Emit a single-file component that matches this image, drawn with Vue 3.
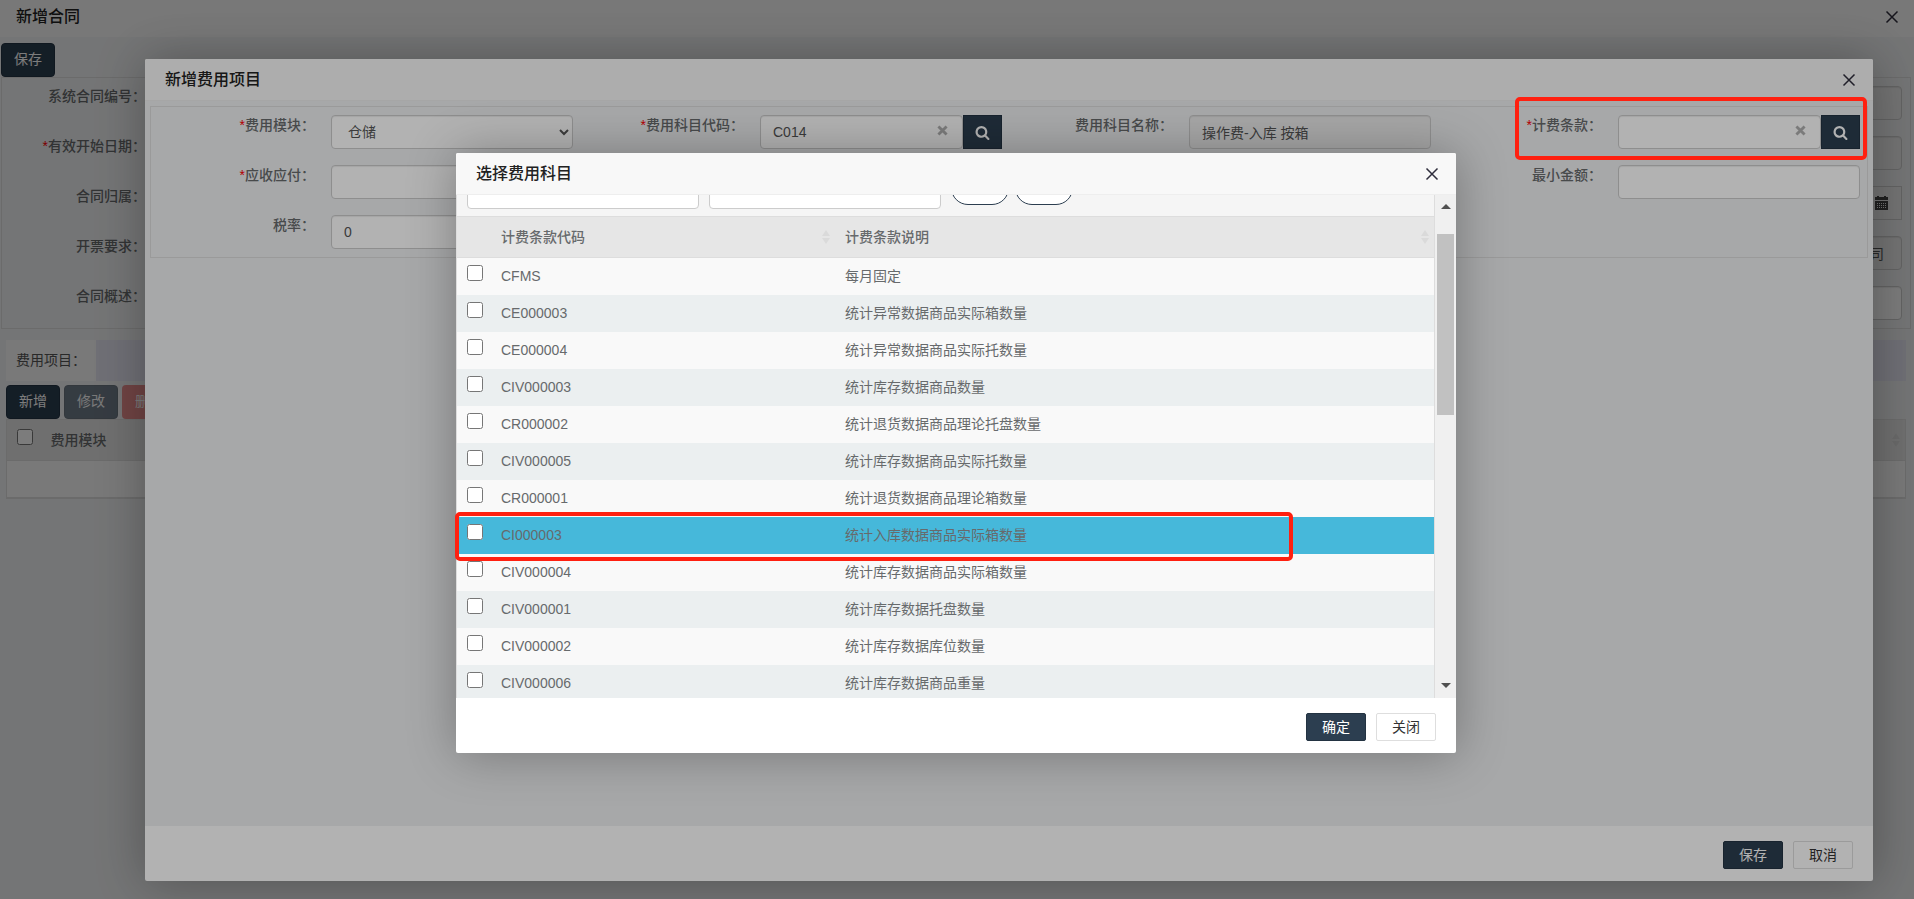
<script setup>
import { ref, onMounted } from 'vue'

const scroller = ref(null)

const contractFields = [
  { id: 'contract-no', label: '系统合同编号', required: false },
  { id: 'start-date', label: '有效开始日期', required: true },
  { id: 'owner', label: '合同归属', required: false },
  { id: 'invoice', label: '开票要求', required: false },
  { id: 'summary', label: '合同概述', required: false },
]

const terms = [
  { code: 'CFMS', name: '每月固定' },
  { code: 'CE000003', name: '统计异常数据商品实际箱数量' },
  { code: 'CE000004', name: '统计异常数据商品实际托数量' },
  { code: 'CIV000003', name: '统计库存数据商品数量' },
  { code: 'CR000002', name: '统计退货数据商品理论托盘数量' },
  { code: 'CIV000005', name: '统计库存数据商品实际托数量' },
  { code: 'CR000001', name: '统计退货数据商品理论箱数量' },
  { code: 'CI000003', name: '统计入库数据商品实际箱数量', active: true },
  { code: 'CIV000004', name: '统计库存数据商品实际箱数量' },
  { code: 'CIV000001', name: '统计库存数据托盘数量' },
  { code: 'CIV000002', name: '统计库存数据库位数量' },
  { code: 'CIV000006', name: '统计库存数据商品重量' },
]

onMounted(() => {
  scroller.value.scrollTop = 28
})
</script>

<template>
  <div class="page">
    <header class="page-head">
      <h1>新增合同</h1>
      <button class="close" type="button" aria-label="关闭">
        <svg viewBox="0 0 16 16"><path d="M2.5 2.5l11 11M13.5 2.5l-11 11" /></svg>
      </button>
    </header>

    <div class="toolbar">
      <button class="btn primary" type="button">保存</button>
    </div>

    <form class="contract">
      <div class="contract-col">
        <div v-for="f in contractFields" :key="f.id" class="contract-field">
          <label :for="f.id"><i v-if="f.required">*</i>{{ f.label }}：</label>
          <input :id="f.id" class="control" type="text">
        </div>
      </div>
      <div class="contract-col side">
        <input class="control" type="text" disabled aria-label="合同信息">
        <input class="control" type="text" disabled aria-label="合同信息">
        <div class="group">
          <input class="control" type="text" aria-label="日期">
          <span class="addon">
            <svg viewBox="0 0 13 14">
              <path fill-rule="evenodd" d="M0 1h2V0h2v1h5V0h2v1h2v3H0zM0 5h13v9H0zM2 7v1h1V7zm2 0v1h1V7zm2 0v1h1V7zm2 0v1h1V7zm2 0v1h1V7zM2 9v1h1V9zm2 0v1h1V9zm2 0v1h1V9zm2 0v1h1V9zm2 0v1h1V9zM2 11v1h1v-1zm2 0v1h1v-1zm2 0v1h1v-1zm2 0v1h1v-1zm2 0v1h1v-1z" />
            </svg>
          </span>
        </div>
        <input class="control company" type="text" value="司" disabled aria-label="公司">
        <input class="control" type="text" aria-label="备注">
      </div>
    </form>

    <section class="items">
      <div class="tabs"><button class="tab" type="button">费用项目：</button></div>
      <div class="actions">
        <button class="btn primary" type="button">新增</button>
        <button class="btn primary" type="button" disabled>修改</button>
        <button class="btn danger" type="button" disabled>删除</button>
      </div>
      <table class="grid-table framed">
        <colgroup><col class="c-check"><col></colgroup>
        <thead>
          <tr>
            <th><input type="checkbox" aria-label="全选"></th>
            <th>
              <div class="th-in"><span>费用模块</span><svg class="sort" viewBox="0 0 8 14"><path d="M4 0l4 6H0zM4 14l4-6H0z" /></svg></div>
            </th>
          </tr>
        </thead>
        <tbody><tr><td></td><td>&nbsp;</td></tr></tbody>
      </table>
    </section>

    <div class="shade outer">
      <section class="dialog">
        <header class="dialog-head">
          <h2>新增费用项目</h2>
          <button class="close" type="button" aria-label="关闭">
            <svg viewBox="0 0 16 16"><path d="M2.5 2.5l11 11M13.5 2.5l-11 11" /></svg>
          </button>
        </header>
        <div class="dialog-body fee-body">
          <form class="fee-form">
            <div class="field">
              <label for="module"><i>*</i>费用模块：</label>
              <select id="module" class="control"><option>仓储</option></select>
            </div>
            <div class="field">
              <label for="code"><i>*</i>费用科目代码：</label>
              <div class="group">
                <div class="clearable">
                  <input id="code" class="control" type="text" value="C014">
                  <button class="clear" type="button" aria-label="清除"><svg viewBox="0 0 10 10"><path d="M1.3 1.3l7.4 7.4M8.7 1.3L1.3 8.7" /></svg></button>
                </div>
                <button class="search" type="button" aria-label="查找">
                  <svg viewBox="0 0 1792 1792"><path d="M1216 832q0-185-131.500-316.500t-316.500-131.500-316.500 131.500-131.500 316.500 131.500 316.500 316.500 131.500 316.500-131.500 131.500-316.500zm512 832q0 52-38 90t-90 38q-54 0-90-38l-343-342q-179 124-399 124-143 0-273.500-55.500t-225-150-150-225-55.500-273.500 55.500-273.500 150-225 225-150 273.500-55.500 273.500 55.500 225 150 150 225 55.500 273.500q0 220-124 399l343 343q37 37 37 90z" /></svg>
                </button>
              </div>
            </div>
            <div class="field">
              <label for="name">费用科目名称：</label>
              <input id="name" class="control" type="text" value="操作费-入库 按箱" disabled>
            </div>
            <div class="field">
              <label for="term"><i>*</i>计费条款：</label>
              <div class="group">
                <div class="clearable">
                  <input id="term" class="control" type="text">
                  <button class="clear" type="button" aria-label="清除"><svg viewBox="0 0 10 10"><path d="M1.3 1.3l7.4 7.4M8.7 1.3L1.3 8.7" /></svg></button>
                </div>
                <button class="search" type="button" aria-label="查找">
                  <svg viewBox="0 0 1792 1792"><path d="M1216 832q0-185-131.500-316.500t-316.500-131.500-316.500 131.500-131.500 316.500 131.500 316.500 316.500 131.500 316.500-131.500 131.500-316.500zm512 832q0 52-38 90t-90 38q-54 0-90-38l-343-342q-179 124-399 124-143 0-273.500-55.500t-225-150-150-225-55.500-273.500 55.500-273.500 150-225 225-150 273.500-55.500 273.500 55.500 225 150 150 225 55.500 273.500q0 220-124 399l343 343q37 37 37 90z" /></svg>
                </button>
              </div>
            </div>
            <div class="field">
              <label for="direction"><i>*</i>应收应付：</label>
              <input id="direction" class="control" type="text">
            </div>
            <div class="field last-col">
              <label for="min">最小金额：</label>
              <input id="min" class="control" type="text">
            </div>
            <div class="field">
              <label for="tax">税率：</label>
              <input id="tax" class="control" type="text" value="0">
            </div>
          </form>
        </div>
        <footer class="dialog-foot">
          <button class="act ok" type="button">保存</button>
          <button class="act" type="button">取消</button>
        </footer>
      </section>
    </div>

    <div class="shade inner">
      <section class="dialog picker">
        <header class="dialog-head">
          <h2>选择费用科目</h2>
          <button class="close" type="button" aria-label="关闭">
            <svg viewBox="0 0 16 16"><path d="M2.5 2.5l11 11M13.5 2.5l-11 11" /></svg>
          </button>
        </header>
        <div class="dialog-body picker-body">
          <div ref="scroller" class="scroller">
            <form class="query">
              <input class="control" type="text" aria-label="计费条款代码">
              <input class="control" type="text" aria-label="计费条款说明">
              <div class="pills">
                <button class="pill" type="button" aria-label="搜索"></button>
                <button class="pill" type="button" aria-label="重置"></button>
              </div>
            </form>
            <table class="grid-table">
              <colgroup><col class="c-check"><col class="c-code"><col></colgroup>
              <thead>
                <tr>
                  <th></th>
                  <th>
                    <div class="th-in"><span>计费条款代码</span><svg class="sort" viewBox="0 0 8 14"><path d="M4 0l4 6H0zM4 14l4-6H0z" /></svg></div>
                  </th>
                  <th>
                    <div class="th-in"><span>计费条款说明</span><svg class="sort" viewBox="0 0 8 14"><path d="M4 0l4 6H0zM4 14l4-6H0z" /></svg></div>
                  </th>
                </tr>
              </thead>
              <tbody>
                <tr v-for="t in terms" :key="t.code" :class="{ active: t.active }">
                  <td><input type="checkbox" :aria-label="t.code"></td>
                  <td>{{ t.code }}</td>
                  <td>{{ t.name }}</td>
                </tr>
              </tbody>
            </table>
          </div>
          <div class="bar">
            <svg viewBox="0 0 10 5"><path d="M0 5l5-5 5 5z" /></svg>
            <div class="track"><div class="thumb"></div></div>
            <svg viewBox="0 0 10 5"><path d="M0 0l5 5 5-5z" /></svg>
          </div>
        </div>
        <footer class="dialog-foot">
          <button class="act ok" type="button">确定</button>
          <button class="act" type="button">关闭</button>
        </footer>
      </section>
    </div>

    <div class="mark mark-term"></div>
    <div class="mark mark-row"></div>
  </div>
</template>

<style>
body {
  margin: 0;
}
</style>

<style scoped>
.page {
  position: relative;
  min-height: 100vh;
  overflow: hidden;
  background: #eff1f3;
  color: #676a6c;
  font: 14px/20px "Liberation Sans", "Noto Sans CJK SC", sans-serif;
}
.page *, .page {
  box-sizing: border-box;
}
button, input, select {
  font: inherit;
  margin: 0;
}
h1, h2 {
  margin: 0;
  font-size: 16px;
  font-weight: 500;
  color: #222;
}
i {
  font-style: normal;
  font-weight: 400;
  color: #f00;
}
.page-head {
  display: flex;
  align-items: center;
  justify-content: space-between;
  height: 37px;
  padding: 0 14px 4px 16px;
  background: #f8f8f8;
}
.close {
  display: flex;
  padding: 0;
  border: 0;
  background: none;
}
.close svg {
  width: 16px;
  height: 16px;
  fill: none;
  stroke: #2e2d3c;
  stroke-width: 1.5;
}
.toolbar {
  padding: 6px 1px 0;
}
.btn {
  height: 34px;
  padding: 5px 12px 7px;
  border: 1px solid transparent;
  border-radius: 4px;
  color: #fff;
}
.btn:disabled {
  opacity: .65;
}
.primary {
  background: #2c3e50;
  border-color: #233342;
}
.danger {
  background: #e15554;
}
.control {
  display: block;
  width: 100%;
  min-width: 0;
  height: 34px;
  padding: 6px 12px;
  border: 1px solid #ccc;
  border-radius: 4px;
  background: #fff;
  color: #555;
  box-shadow: inset 0 1px 1px rgba(0, 0, 0, .075);
}
.control:disabled {
  background: #eee;
}
.contract {
  display: flex;
  justify-content: space-between;
  margin: 0 3px 0 1px;
  padding: 8px;
  border: 1px solid #ddd;
}
.contract-col {
  display: grid;
  gap: 16px;
  width: 24%;
}
.contract-field {
  display: grid;
  grid-template-columns: 136px 1fr;
  gap: 16px;
}
label {
  font-weight: 500;
  text-align: right;
  white-space: nowrap;
}
.side {
  width: 14%;
}
.group {
  display: flex;
}
.addon {
  display: flex;
  align-items: center;
  padding: 0 13px;
  border: 1px solid #ccc;
  background: #eee;
}
.addon svg {
  width: 13px;
  height: 14px;
  fill: #444;
}
.company {
  text-align: right;
  padding-right: 17px;
}
.items {
  padding: 11px 8px 0 6px;
}
.tabs {
  display: flex;
  background: #e6e6f2;
}
.tab {
  height: 41px;
  padding: 0 10px 2px;
  border: 0;
  background: #f9f9f9;
  color: #555;
}
.actions {
  display: flex;
  gap: 4px;
  padding-top: 4px;
}
.grid-table {
  width: 100%;
  table-layout: fixed;
  border-collapse: collapse;
}
.framed {
  border: 1px solid #ddd;
  border-bottom-width: 2px;
}
.c-check {
  width: 34px;
}
.c-code {
  width: 344px;
}
th {
  height: 41px;
  padding: 0 5px 0 10px;
  border-top: 1px solid #ddd;
  border-bottom: 1px solid #ddd;
  background: #e6e6e6;
  font-weight: 500;
  text-align: left;
}
.th-in {
  display: flex;
  align-items: center;
  justify-content: space-between;
}
.sort {
  width: 8px;
  height: 14px;
  fill: #dadada;
}
td {
  height: 37px;
  padding: 0 10px;
  background: #f9f9f9;
}
tr:nth-child(even) td {
  background: #ebeff0;
}
tr.active td {
  background: #46b8da;
}
input[type="checkbox"] {
  display: block;
  width: 16px;
  height: 16px;
  margin-bottom: 6px;
}
.shade {
  position: absolute;
  inset: 0;
  display: flex;
  background: rgba(0, 0, 0, .3);
}
.outer {
  padding: 59px 41px 18px 145px;
}
.inner {
  align-items: center;
  justify-content: center;
  padding: 7px 2px 0 0;
}
.dialog {
  display: flex;
  flex-direction: column;
  flex: 1;
  border-radius: 2px;
  background: #fff;
  box-shadow: 1px 1px 50px rgba(0, 0, 0, .3);
}
.dialog-head {
  display: flex;
  align-items: center;
  justify-content: space-between;
  height: 42px;
  padding: 0 16px 0 20px;
  border-bottom: 1px solid #eee;
  border-radius: 2px 2px 0 0;
  background: #f8f8f8;
}
.dialog-body {
  flex: 1;
  min-height: 0;
}
.fee-body {
  padding: 5px;
  background: #eff1f3;
}
.fee-form {
  display: grid;
  grid-template-columns: repeat(4, 1fr);
  row-gap: 16px;
  padding: 8px 0;
  border: 1px solid #ddd;
}
.field {
  display: grid;
  grid-template-columns: 164px minmax(0, 1fr);
  gap: 16px;
  padding-right: 7px;
}
.last-col {
  grid-column: 4;
}
.clearable {
  position: relative;
  flex: 1;
}
.clear {
  position: absolute;
  top: 10px;
  right: 15px;
  display: flex;
  padding: 0;
  border: 0;
  background: none;
}
.clear svg {
  width: 11px;
  height: 11px;
  stroke: #b0b0b0;
  stroke-width: 2.6;
}
.search {
  display: flex;
  align-items: center;
  justify-content: center;
  width: 39px;
  height: 34px;
  padding: 0;
  border: 1px solid #233342;
  background: #2c3e50;
}
.search svg {
  width: 15px;
  height: 15px;
  fill: #fff;
}
.dialog-foot {
  display: flex;
  justify-content: flex-end;
  gap: 10px;
  padding: 15px 20px 12px;
}
.act {
  width: 60px;
  height: 28px;
  padding: 0;
  border: 1px solid #dedede;
  border-radius: 2px;
  background: #fff;
  color: #333;
}
.ok {
  border-color: #233342;
  background: #2c3e50;
  color: #fff;
}
.picker {
  flex: 0 0 1000px;
  height: 600px;
}
.picker-body {
  display: flex;
}
.scroller {
  flex: 1;
  overflow-y: auto;
  scrollbar-width: none;
  border: solid #ddd;
  border-width: 0 1px;
  background: #f5f5f5;
}
.query {
  display: flex;
  align-items: flex-end;
  gap: 10px;
  padding: 4px 10px 7px;
}
.query .control {
  width: 232px;
}
.pills {
  display: flex;
  gap: 6px;
  padding-bottom: 4px;
}
.pill {
  width: 58px;
  height: 34px;
  padding: 0;
  border: 1px solid #2c3e50;
  border-radius: 17px;
  background: #fff;
}
.bar {
  display: flex;
  flex-direction: column;
  align-items: center;
  width: 21px;
  padding: 9px 0 10px;
  background: #f0f0f0;
}
.bar svg {
  width: 10px;
  height: 5px;
  fill: #505050;
}
.track {
  flex: 1;
  width: 17px;
  padding: 25px 0;
}
.thumb {
  height: 181px;
  background: #c1c1c1;
}
.mark {
  position: absolute;
  border: 4px solid #ff2010;
  border-radius: 5px;
}
.mark-term {
  top: 97px;
  right: 47px;
  width: 352px;
  height: 63px;
}
.mark-row {
  top: 512px;
  left: calc(50% - 502px);
  width: 838px;
  height: 49px;
}
</style>
